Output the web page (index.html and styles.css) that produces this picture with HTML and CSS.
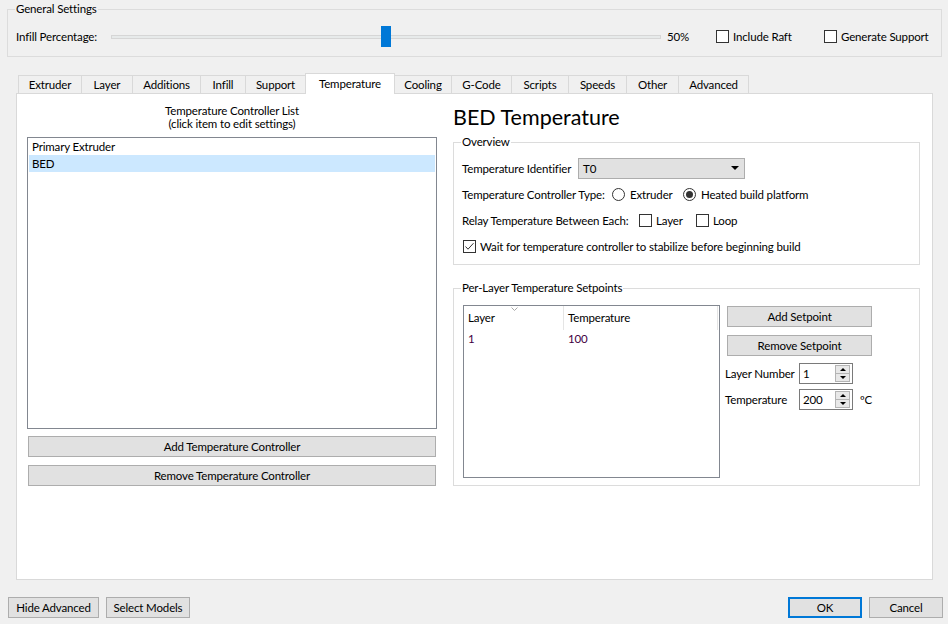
FILE: index.html
```html
<!DOCTYPE html>
<html>
<head>
<meta charset="utf-8">
<title>Settings</title>
<link rel="stylesheet" href="styles.css">
</head>
<body>
<div class="window">
  <fieldset class="group general">
    <legend>General Settings</legend>
    <div class="general-row">
      <span class="infill-label">Infill Percentage:</span>
      <div class="slider" style="--value:0.5">
        <div class="track"></div>
        <div class="thumb"></div>
      </div>
      <span class="pct">50%</span>
      <label class="check raft"><span class="box"></span>Include Raft</label>
      <label class="check"><span class="box"></span>Generate Support</label>
    </div>
  </fieldset>

  <div class="tabs">
    <div class="tabbar">
      <div class="tab">Extruder</div>
      <div class="tab">Layer</div>
      <div class="tab">Additions</div>
      <div class="tab">Infill</div>
      <div class="tab">Support</div>
      <div class="tab active">Temperature</div>
      <div class="tab">Cooling</div>
      <div class="tab">G-Code</div>
      <div class="tab">Scripts</div>
      <div class="tab">Speeds</div>
      <div class="tab">Other</div>
      <div class="tab">Advanced</div>
    </div>
    <div class="pane">
      <div class="left-col">
        <div class="caption"><div>Temperature Controller List</div><div>(click item to edit settings)</div></div>
        <div class="listbox">
          <div class="item">Primary Extruder</div>
          <div class="item selected">BED</div>
        </div>
        <button class="btn wide">Add Temperature Controller</button>
        <button class="btn wide second">Remove Temperature Controller</button>
      </div>
      <div class="right-col">
        <h1 class="title">BED Temperature</h1>
        <fieldset class="group overview">
          <legend>Overview</legend>
          <div class="ov-rows">
            <div class="row">
              <span class="lbl-ident">Temperature Identifier</span>
              <div class="combo"><span>T0</span><span class="combo-arrow"></span></div>
            </div>
            <div class="row">
              <span class="lbl-type">Temperature Controller Type:</span>
              <label class="radio opt-extruder"><span class="circle"></span>Extruder</label>
              <label class="radio"><span class="circle on"></span>Heated build platform</label>
            </div>
            <div class="row">
              <span class="lbl-relay">Relay Temperature Between Each:</span>
              <label class="check opt-layer"><span class="box"></span>Layer</label>
              <label class="check"><span class="box"></span>Loop</label>
            </div>
            <div class="row">
              <label class="check wait"><span class="box"><svg width="11" height="11" viewBox="0 0 11 11"><polyline points="1.5,5.5 4,8.2 9.5,2.2" fill="none" stroke="#333" stroke-width="1"/></svg></span>Wait for temperature controller to stabilize before beginning build</label>
            </div>
          </div>
        </fieldset>
        <fieldset class="group perlayer">
          <legend>Per-Layer Temperature Setpoints</legend>
          <div class="pl-body">
            <div class="listview">
              <div class="lv-head">
                <div class="lv-cell c1">Layer<svg class="sort" width="7" height="4" viewBox="0 0 7 4"><polyline points="0.5,0.5 3.5,3.5 6.5,0.5" fill="none" stroke="#a8a8a8" stroke-width="1"/></svg></div>
                <div class="lv-cell c2 divided">Temperature</div>
              </div>
              <div class="lv-row">
                <div class="lv-cell c1">1</div>
                <div class="lv-cell c2">100</div>
              </div>
            </div>
            <div class="pl-side">
              <button class="btn side-btn">Add Setpoint</button>
              <button class="btn side-btn second">Remove Setpoint</button>
              <div class="spin-row first">
                <span class="spin-label">Layer Number</span>
                <div class="spin"><span class="spin-val">1</span><span class="spin-btns"><span class="up"></span><span class="down"></span></span></div>
              </div>
              <div class="spin-row">
                <span class="spin-label">Temperature</span>
                <div class="spin"><span class="spin-val">200</span><span class="spin-btns"><span class="up"></span><span class="down"></span></span></div>
                <span class="unit">ºC</span>
              </div>
            </div>
          </div>
        </fieldset>
      </div>
    </div>
  </div>

  <div class="bottombar">
    <button class="btn b-hide">Hide Advanced</button>
    <button class="btn b-select">Select Models</button>
    <span class="spacer"></span>
    <button class="btn b-ok">OK</button>
    <button class="btn b-cancel">Cancel</button>
  </div>
</div>
</body>
</html>
```

FILE: styles.css
```css
* { box-sizing: border-box; }
html, body { margin: 0; padding: 0; }
body {
  width: 948px;
  height: 624px;
  overflow: hidden;
  background: #f0f0f0;
  font-family: "Segoe UI", Lato, "Noto Sans", sans-serif;
  font-size: 11.5px;
  letter-spacing: -0.15px;
  line-height: 15px;
  color: #000;
  white-space: nowrap;
}
.window { display: flex; flex-direction: column; height: 624px; }

/* group boxes */
.group {
  border: 1px solid #dcdcdc;
  margin: 0;
  padding: 0;
  min-width: 0;
}
.group legend {
  padding: 0 1px;
  line-height: 16px;
}

.general { margin: 1px 6px 0 7px; padding: 9px 8px 9px 8px; }
.general legend { margin-left: -1px; }
.general-row { display: flex; align-items: center; height: 21px; }
.infill-label { width: 95px; flex: none; }
.slider {
  position: relative;
  width: 550px;
  height: 21px;
  flex: none;
  display: flex;
  align-items: center;
}
.track {
  width: 100%;
  height: 4px;
  background: #e7eaea;
  border: 1px solid #d6d6d6;
}
.thumb {
  position: absolute;
  top: 0;
  left: calc(var(--value) * (100% - 10px));
  width: 10px;
  height: 21px;
  background: #0078d7;
}
.pct { margin-left: 6px; width: 49px; flex: none; }

.check, .radio { display: inline-flex; align-items: center; white-space: nowrap; }
.box {
  width: 13px; height: 13px;
  border: 1px solid #333;
  background: #fff;
  margin-right: 4px;
  flex: none;
  display: flex; align-items: center; justify-content: center;
}
.raft { width: 108px; flex: none; }

/* tabs */
.tabs { margin: 16px 15px 0 16px; }
.tabbar {
  display: grid;
  grid-template-columns: 63px 51px 68px 45px 60px 89px 57px 60px 57px 58px 52px 70px;
  padding-left: 2px;
  height: 20px;
  align-items: end;
}
.tab {
  height: 18px;
  border: 1px solid #d9d9d9;
  border-bottom: none;
  margin-right: -1px;
  background: #f0f0f0;
  text-align: center;
  line-height: 17px;
  padding-top: 0;
  white-space: nowrap;
}
.tab.active {
  height: 21px;
  margin-bottom: -1px;
  background: #fff;
  position: relative;
  z-index: 1;
  line-height: 20px;
  padding-top: 0;
}
.pane {
  height: 487px;
  border: 1px solid #d9d9d9;
  background: #fff;
  display: grid;
  grid-template-columns: 410px 467px;
  column-gap: 16px;
  padding: 10px 0 0 10px;
  align-items: start;
}

/* left column */
.caption { text-align: center; line-height: 13px; }
.listbox {
  margin-top: 7px;
  height: 292px;
  border: 1px solid #828790;
  background: #fff;
  padding: 0 1px;
}
.item { height: 17px; line-height: 17px; padding-left: 3px; }
.item.selected { background: #cce8ff; }

.btn {
  font: inherit;
  letter-spacing: inherit;
  color: #000;
  background: #e1e1e1;
  border: 1px solid #adadad;
  height: 21px;
  padding: 0;
  line-height: 19px;
  margin: 0;
  border-radius: 0;
}
.wide { display: block; width: calc(100% - 2px); margin: 7px 1px 0; }
.wide.second { margin-top: 8px; }

/* right column */
.title {
  margin: 0;
  font-size: 21.5px;
  letter-spacing: 0;
  line-height: 26px;
  font-weight: normal;
}
.overview { margin-top: 4px; padding: 8px 8px 8px 8px; }
.overview legend { margin-left: -1px; }
.ov-rows { display: flex; flex-direction: column; gap: 6px; }
.row { display: flex; align-items: center; height: 20px; }
.lbl-ident { width: 116px; flex: none; }
.combo {
  width: 167px;
  height: 21px;
  background: #e1e1e1;
  border: 1px solid #adadad;
  display: flex;
  align-items: center;
  justify-content: space-between;
  padding: 0 5px 0 4px;
}
.combo-arrow {
  width: 0; height: 0;
  border-left: 4px solid transparent;
  border-right: 4px solid transparent;
  border-top: 4px solid #000;
}
.lbl-type { width: 150px; flex: none; }
.circle {
  width: 13px; height: 13px;
  border: 1px solid #333;
  border-radius: 50%;
  background: #fff;
  margin-right: 5px;
  flex: none;
  display: flex; align-items: center; justify-content: center;
}
.circle.on::after {
  content: "";
  width: 7px; height: 7px;
  border-radius: 50%;
  background: #333;
}
.opt-extruder { width: 71px; flex: none; }
.lbl-relay { width: 177px; flex: none; }
.opt-layer { width: 57px; flex: none; }
.wait { margin-left: 1px; }

.perlayer { margin-top: 15px; padding: 9px 8px 7px 9px; }
.perlayer legend { margin-left: -2px; }
.pl-body { display: flex; align-items: flex-start; }
.listview {
  width: 257px;
  height: 173px;
  border: 1px solid #828790;
  background: #fff;
  flex: none;
}
.lv-head { display: flex; height: 24px; }
.lv-row { display: flex; height: 17px; color: #3f003f; }
.lv-cell { line-height: 17px; padding-left: 4px; white-space: nowrap; }
.lv-head .lv-cell { line-height: 24px; }
.lv-cell.c1 { width: 99px; position: relative; }
.lv-cell.c2 { flex: 1; }
.lv-head .c2.divided { border-left: 1px solid #e5e5e5; border-right: 1px solid #e5e5e5; margin-right: 1px; }
.lv-row .c2 { padding-left: 5px; }
.sort { position: absolute; left: 47px; top: 1px; }

.pl-side { margin-left: 5px; width: 150px; display: flex; flex-direction: column; flex: none; }
.side-btn { width: 145px; margin-left: 2px; margin-top: 1px; }
.side-btn.second { margin-top: 8px; }
.spin-row { display: flex; align-items: center; height: 21px; margin-top: 5px; }
.spin-row.first { margin-top: 7px; }
.spin-label { width: 74px; flex: none; }
.spin {
  width: 54px;
  height: 21px;
  border: 1px solid #7a7a7a;
  background: #fff;
  display: flex;
  align-items: center;
  padding-left: 3px;
  flex: none;
}
.spin-val { flex: 1; }
.spin-btns {
  width: 15px;
  height: 17px;
  margin-right: 2px;
  border: 1px solid #b4b4b4;
  background: #e8e8e8;
  display: flex;
  flex-direction: column;
}
.spin-btns .up, .spin-btns .down {
  flex: 1;
  display: flex;
  align-items: center;
  justify-content: center;
}
.spin-btns .up { border-bottom: 1px solid #b4b4b4; }
.spin-btns .up::after {
  content: "";
  border-left: 3px solid transparent;
  border-right: 3px solid transparent;
  border-bottom: 3px solid #000;
}
.spin-btns .down::after {
  content: "";
  border-left: 3px solid transparent;
  border-right: 3px solid transparent;
  border-top: 3px solid #000;
}
.unit { margin-left: 7px; }

/* bottom bar */
.bottombar {
  display: flex;
  margin-top: 17px;
  padding: 0 5px 0 8px;
  height: 21px;
}
.b-hide { width: 91px; }
.b-select { width: 84px; margin-left: 7px; }
.spacer { flex: 1; }
.b-ok { width: 74px; border: 2px solid #0078d7; line-height: 17px; }
.b-cancel { width: 74px; margin-left: 7px; }
```
